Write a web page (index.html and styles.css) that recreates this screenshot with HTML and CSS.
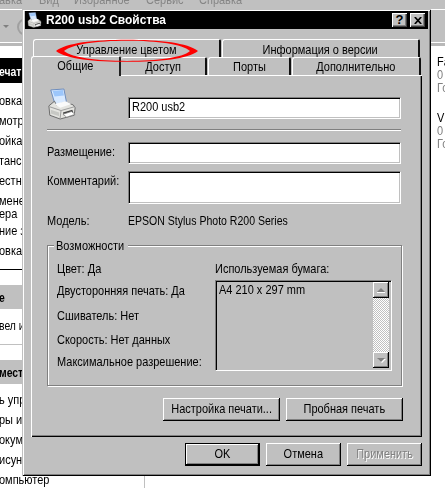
FILE: index.html
```html
<!DOCTYPE html>
<html lang="ru">
<head>
<meta charset="utf-8">
<title>R200 usb2 Свойства</title>
<link rel="stylesheet" href="styles.css">
</head>
<body>
<div class="explorer">
  <div class="menu"><span class="m1">авка</span><span class="m2">Вид</span><span class="m3">Избранное</span><span class="m4">Сервис</span><span class="m5">Справка</span></div>
  <div class="toolbar"><i class="drop"></i><i class="round"></i></div>
  <div class="main">
    <div class="side">
      <div class="head dark"><p>ечат</p></div>
      <div class="links first"><p>овка</p><p>мотр</p><p>ойка</p><p>танс</p><p>естнь</p><p class="wrap">мене</p><p class="wrap second-line">ера</p><p>ние з</p><p>овка</p></div>
      <div class="head second"><p>е</p></div>
      <div class="note"><p>вел и</p></div>
      <div class="head"><p>мест</p></div>
      <div class="links last"><p>ь упр</p><p>ры и</p><p>окум</p><p>исун</p><p>омпьютер</p></div>
    </div>
    <div class="files"><div><p class="title-line">Fa</p><p>0</p><p>Го</p></div><div><p class="title-line">V</p><p>0</p><p>Го</p></div></div>
  </div>
</div>

<div class="dialog">
  <div class="title">
    <svg class="small-icon" viewBox="0 0 32 34"><use href="#printer"/></svg>
    <span>R200 usb2 Свойства</span>
    <b class="cap">?</b>
    <b class="cap"><svg width="8" height="7" viewBox="0 0 8 7"><path d="M.8 0 7.2 7M7.2 0 .8 7" stroke="#000" stroke-width="1.7"/></svg></b>
  </div>
  <div class="tabs upper">
    <div class="tab w1"><span>Управление цветом</span>
      <svg class="mark" viewBox="0 0 142 24"><path fill="red" fill-rule="evenodd" d="M0 12C10 4 38 .8 71 .8S132 4 142 12C132 20 104 22.8 71 22.8S10 20 0 12ZM8 12C17 18.8 40 21.9 71 21.9S126 18.8 134 12C126 5 102 1.7 71 1.7S17 5 8 12Z"/></svg>
    </div>
    <div class="tab w2"><span>Информация о версии</span></div>
  </div>
  <div class="tabs lower">
    <div class="tab active"><span>Общие</span></div>
    <div class="tab w4"><span>Доступ</span></div>
    <div class="tab w5"><span>Порты</span></div>
    <div class="tab w6"><span>Дополнительно</span></div>
  </div>
  <div class="page">
    <div class="row name">
      <svg class="icon" viewBox="0 0 32 34">
        <g id="printer">
          <path d="M4 2 18 1 21 16 9 19Z" fill="#d8e9ff" stroke="#6688bb"/>
          <path d="M6 3 17 2 18 8 8 9Z" fill="#9cc6fb"/>
          <path d="M2 19 8 14 10 18 20 15 28 18 30 21 29 29 14 33 3 29Z" fill="#e4e4e0" stroke="#666"/>
          <path d="M3 20 15 24 29 20M15 24 14 32" fill="none" stroke="#999"/>
          <path d="M8 17 20 14 26 17 14 21Z" fill="#fafafa"/>
          <path d="M17 26 27 23 28 26 18 29Z" fill="#444"/>
          <path d="M17 28 26 25 30 28 21 31Z" fill="#fff" stroke="#777" stroke-width=".7"/>
          <path d="M4 23 13 26V30L4 27Z" fill="#c7c8c4"/>
        </g>
      </svg>
      <div class="field"><span>R200 usb2</span></div>
    </div>
    <div class="rule"></div>
    <div class="row place"><label><span>Размещение:</span></label><div class="field"></div></div>
    <div class="row comment"><label><span>Комментарий:</span></label><div class="field"></div></div>
    <div class="row model"><label><span>Модель:</span></label><span class="latin">EPSON Stylus Photo R200 Series</span></div>
    <div class="group">
      <div class="legend"><span>Возможности</span></div>
      <div class="caps">
        <p>Цвет: Да</p><p>Двусторонняя печать: Да</p><p class="c3">Сшиватель: Нет</p><p class="c4">Скорость: Нет данных</p><p class="c5">Максимальное разрешение:</p>
      </div>
      <div class="paper">
        <p>Используемая бумага:</p>
        <div class="list"><span>A4 210 x 297 mm</span>
          <div class="scroll"><div class="arrow"><i class="up"></i></div><div class="arrow"><i class="down"></i></div></div>
        </div>
      </div>
    </div>
    <div class="actions"><div class="btn wide"><span>Настройка печати...</span></div><div class="btn wide"><span>Пробная печать</span></div></div>
  </div>
  <div class="footer"><div class="btn default"><span>OK</span></div><div class="btn"><span>Отмена</span></div><div class="btn disabled"><span>Применить</span></div></div>
</div>
</body>
</html>
```
FILE: styles.css
```css
* { box-sizing: border-box; }
body { margin: 0; width: 445px; height: 488px; overflow: hidden; position: relative; background: #fff;
  font: 13px/16px "Liberation Sans", sans-serif; color: #000; }
p { margin: 0; transform: scaleX(.845); transform-origin: 0 50%; white-space: nowrap; }
span { display: inline-block; flex: none; transform: scaleX(.845); transform-origin: 0 50%; white-space: nowrap; }

.explorer { height: 488px; overflow: hidden; }
.menu { height: 9px; background: #c0c0c0; color: #858585; display: flex; line-height: 16px; }
.menu span { margin-top: -8px; }
.m1 { width: 40px; margin-left: -1px; }
.m2 { width: 35px; }
.m3 { width: 72px; }
.m4 { width: 53px; }
.toolbar { height: 37px; background: #c0c0c0; border-top: 1px solid #fff; border-bottom: 3px solid #b8b8b8; box-shadow: inset 0 -1px #fff; display: flex; align-items: center; }
.drop { border: 3px solid transparent; border-top-color: #808080; border-bottom: 0; margin-left: 3px; }
.round { width: 18px; height: 18px; border: 2px solid #a0a0a0; border-radius: 50%; margin-left: 8px; }
.main { display: flex; height: 442px; }
.side { flex: none; width: 145px; border-right: 1px solid #c0c0c0; padding-top: 12px; }
.side p { margin-left: -1px; }
.head { height: 24px; line-height: 26px; background: #c0c0c0; font-weight: bold; }
.head p { transform: scaleX(.8); }
.dark { background: #000; color: #fff; height: 25px; line-height: 27px; }
.first { height: 187px; padding-top: 8px; border-bottom: 1px solid #000; }
.links p { height: 20px; line-height: 20px; }
.links .wrap { height: 15px; }
.links .second-line { line-height: 16px; }
.second { margin-top: 15px; }
.note { height: 36px; line-height: 34px; border-bottom: 1px solid #c0c0c0; margin-bottom: 15px; }
.note p { transform: scaleX(.8); }
.last { padding-top: 6px; }
.files { flex: none; padding: 9px 0 0 292px; line-height: 13px; }
.files div { height: 56px; }
.files p { color: #808080; }
.files .title-line { color: #000; }

.dialog { position: absolute; left: 22px; top: 9px; width: 409px; height: 467px; padding: 2px 3px; background: #c0c0c0;
  box-shadow: inset 1px 1px #c0c0c0, inset -1px -1px #000, inset 2px 2px #fff, inset -2px -2px #808080; }
.title { height: 18px; background: #000; color: #fff; display: flex; align-items: center; font-weight: bold; line-height: 18px; }
.title > span { flex: 1; margin-left: 4px; transform: scaleX(.92); }
.small-icon { width: 15px; height: 16px; margin-left: 2px; }
.cap { width: 15px; height: 14px; margin-right: 3px; background: #c0c0c0; color: #000; display: flex; align-items: center; justify-content: center; line-height: 14px;
  box-shadow: inset 1px 1px #fff, inset -1px -1px #404040, inset -2px -2px #808080; }

.tabs { display: flex; height: 18px; }
.upper { margin: 10px 0 0 8px; }
.lower { margin-left: 6px; }
.tab { position: relative; height: 18px; line-height: 19px; display: flex; justify-content: center; border: 1px solid #fff; border-bottom: 0; border-right: 2px solid #101010; border-radius: 3px 2px 0 0; background: #c0c0c0; }
.tab span, .btn span { transform-origin: 50% 50%; }
.lower .tab { line-height: 18px; }
.w1 { width: 188px; margin-right: 1px; }
.w2 { width: 198px; }
.active { width: 90px; height: 20px; margin-top: -1px; z-index: 1; border-right: 2px solid #202020; }
.w4 { width: 86px; border-left: 0; }
.w5 { width: 83px; margin-left: 1px; }
.w6 { width: 129px; margin-left: 1px; }
.mark { position: absolute; left: 22px; top: -1px; width: 142px; height: 24px; z-index: 3; }
.upper .w1 { z-index: 2; background: none; }

.page { margin-left: 6px; width: 391px; height: 362px; padding: 22px 18px 0 15px; border-left: 1px solid #fff; border-top: 1px solid #fff;
  box-shadow: inset -1px -1px #000, inset -2px -2px #808080; }
.row { display: flex; }
.row label { flex: none; width: 81px; padding-top: 2px; }
.field { flex: none; width: 273px; height: 22px; padding: 2px 3px; background: #fff; border: 1px solid #808080; border-right-color: #fff; border-bottom-color: #fff;
  box-shadow: inset 1px 1px #000, inset -1px -1px #c0c0c0; line-height: 14px; }
.name { margin-top: -1px; height: 32px; }
.icon { flex: none; width: 30px; height: 32px; margin: -9px 51px 0 0; overflow: visible; }
.rule { height: 2px; width: 354px; background: #808080; border-bottom: 1px solid #fff; }
.place { margin-top: 11px; }
.comment { margin-top: 7px; }
.comment .field { height: 33px; }
.model { margin-top: 9px; height: 32px; }
.row.model label { padding: 0; }
.model .latin { transform: scaleX(.81); }
.group { width: 355px; height: 141px; border: 1px solid #808080; box-shadow: inset 1px 1px #fff, 1px 1px #fff; display: flex; }
.legend { position: absolute; width: 74px; height: 16px; margin: -8px 0 0 6px; background: #c0c0c0; padding-left: 2px; }
.caps { flex: none; width: 167px; padding: 15px 0 0 9px; }
.caps p { height: 22px; }
.caps .c3 { margin-top: 3px; height: 24px; }
.caps .c4 { height: 22px; }
.paper { flex: none; width: 177px; padding-top: 15px; }
.list { display: flex; justify-content: space-between; width: 177px; height: 91px; margin-top: 3px; padding: 1px 2px 2px 3px; border: 1px solid #808080; border-right-color: #fff; border-bottom-color: #fff; box-shadow: inset 1px 1px #000; }
.scroll { width: 16px; display: flex; flex-direction: column; justify-content: space-between; background: repeating-conic-gradient(#c0c0c0 0 25%, #fff 0 50%) 0 0 / 2px 2px; }
.arrow { height: 16px; background: #c0c0c0; box-shadow: inset -1px -1px #000, inset 1px 1px #fff, inset -2px -2px #808080; display: flex; align-items: center; justify-content: center; }
.up, .down { border: 4px solid transparent; }
.up { border-top: 0; border-bottom-color: #808080; box-shadow: 0 1px #fff; }
.down { border-bottom: 0; border-top-color: #808080; filter: drop-shadow(1px 1px #fff); }

.actions { display: flex; gap: 6px; margin: 12px 0 0 116px; }
.btn { flex: none; display: flex; justify-content: center; width: 75px; height: 23px; line-height: 22px; box-shadow: inset -1px -1px #000, inset 1px 1px #fff, inset -2px -2px #808080; }
.wide { width: 117px; }
.footer { display: flex; gap: 6px; margin: 6px 0 0 160px; }
.default { border: 1px solid #000; line-height: 20px; }
.disabled { color: #808080; text-shadow: 1px 1px #fff; }
```
